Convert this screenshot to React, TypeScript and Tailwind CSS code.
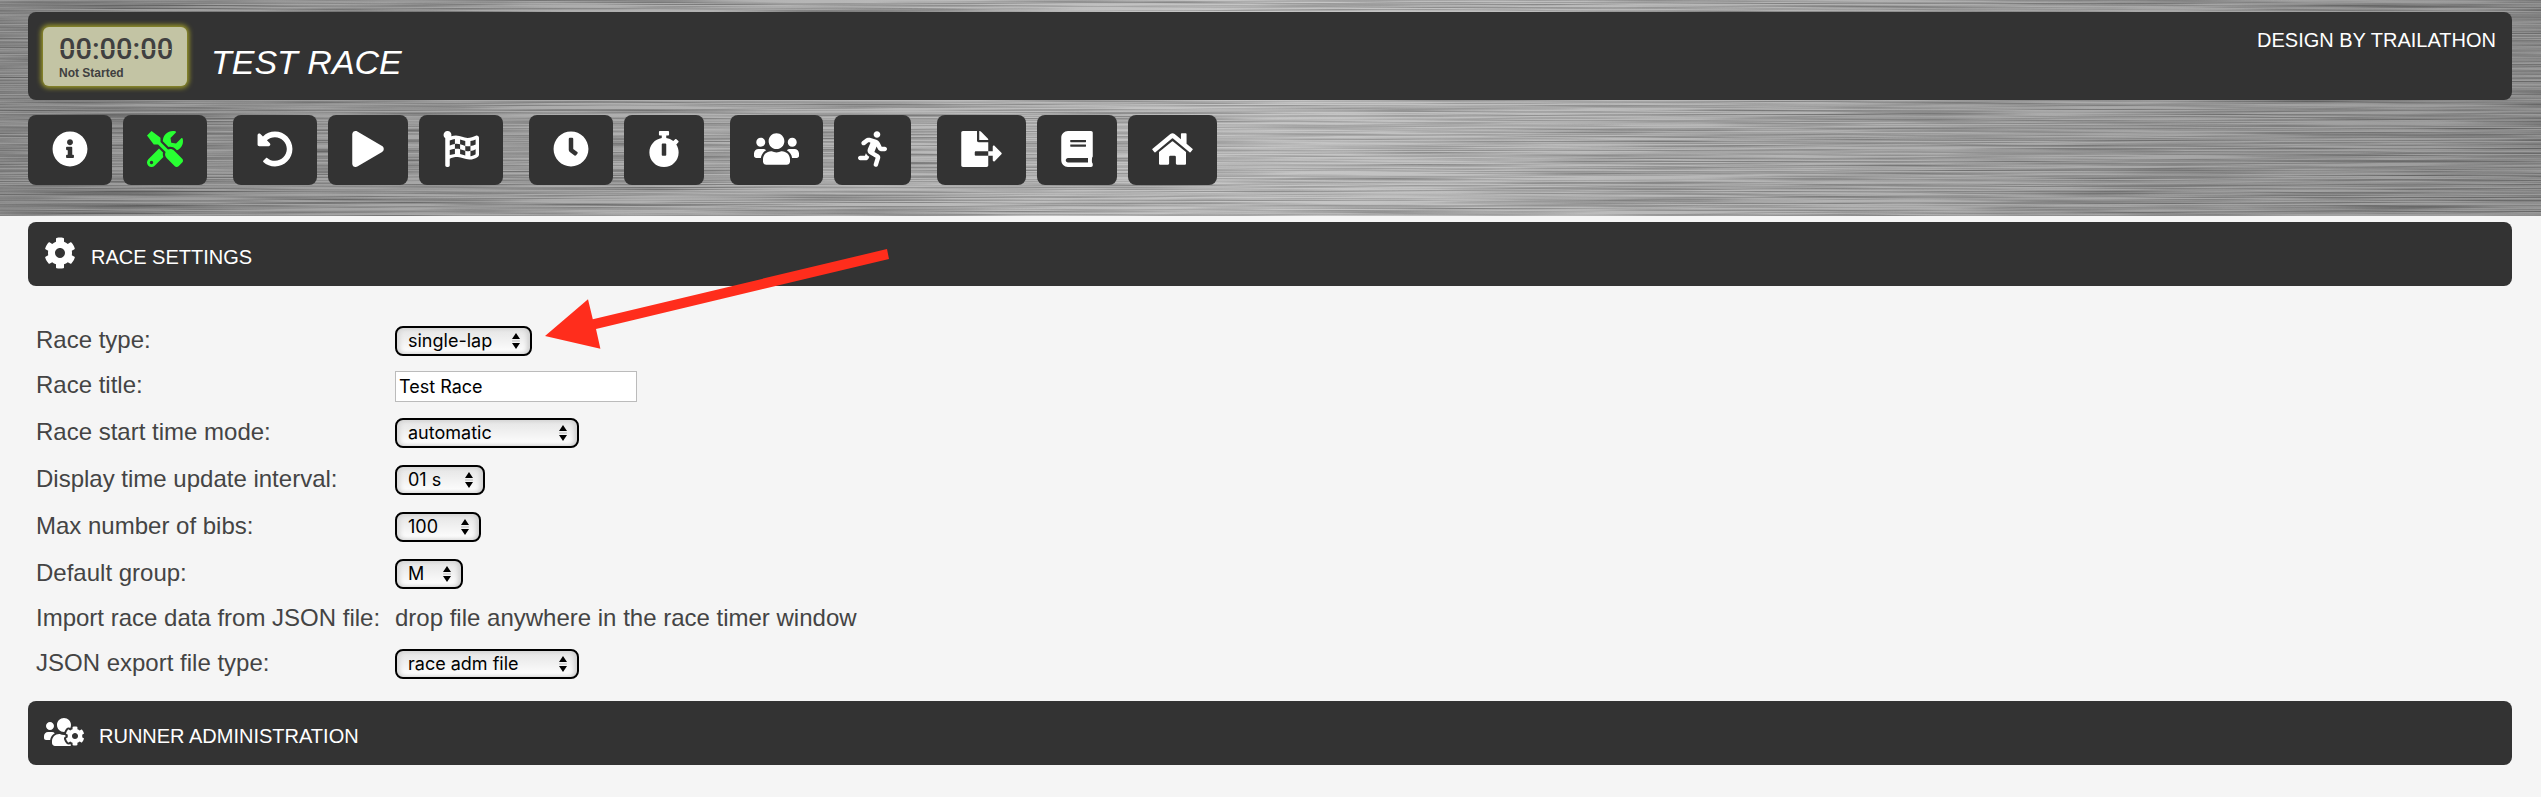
import { useState } from "react";
import type { ReactNode } from "react";
import type { IconType } from "react-icons";
import {
  FaBook,
  FaClock,
  FaCog,
  FaFileExport,
  FaFlagCheckered,
  FaHome,
  FaInfoCircle,
  FaPlay,
  FaRunning,
  FaStopwatch,
  FaTools,
  FaUndoAlt,
  FaUsers,
  FaUsersCog,
} from "react-icons/fa";

type Tool = { label: string; icon: IconType; width: string; active?: boolean };

const toolGroups: Tool[][] = [
  [
    { label: "Info", icon: FaInfoCircle, width: "w-9" },
    { label: "Settings", icon: FaTools, width: "w-9", active: true },
  ],
  [
    { label: "Reset", icon: FaUndoAlt, width: "w-9" },
    { label: "Start", icon: FaPlay, width: "w-8" },
    { label: "Finish", icon: FaFlagCheckered, width: "w-9" },
  ],
  [
    { label: "Clock", icon: FaClock, width: "w-9" },
    { label: "Stopwatch", icon: FaStopwatch, width: "w-8" },
  ],
  [
    { label: "Runners", icon: FaUsers, width: "w-[45px]" },
    { label: "Runner", icon: FaRunning, width: "w-[29px]" },
  ],
  [
    { label: "Export", icon: FaFileExport, width: "w-[41px]" },
    { label: "Manual", icon: FaBook, width: "w-8" },
    { label: "Home", icon: FaHome, width: "w-[41px]" },
  ],
];

// Brushed steel behind the header and the toolbar
function BrushedMetal() {
  return (
    <div className="absolute inset-0 -z-10 overflow-hidden bg-linear-to-r from-[#767676] via-[#b4b4b4] to-[#787878]">
      <svg className="h-full w-full" aria-hidden="true">
        <filter id="brushed" x="0" y="0" width="100%" height="100%" colorInterpolationFilters="sRGB">
          <feTurbulence type="fractalNoise" baseFrequency="0.004 0.7" numOctaves="3" seed="4" />
          <feColorMatrix values="2 0 0 0 -0.3  2 0 0 0 -0.3  2 0 0 0 -0.3  0 0 0 0 0.25" />
        </filter>
        <rect width="100%" height="100%" filter="url(#brushed)" />
      </svg>
    </div>
  );
}

function ToolButton({ label, icon: Icon, width, active }: Tool) {
  return (
    <button
      type="button"
      aria-label={label}
      className={`rounded-lg bg-[#333333] px-6 pt-4 pb-[18px] ${active ? "text-[#28ff32]" : "text-white"}`}
    >
      <Icon className={`h-9 ${width}`} />
    </button>
  );
}

function SectionBar({ title, icon: Icon, iconWidth }: { title: string; icon: IconType; iconWidth: string }) {
  return (
    <h2 className="flex h-16 items-start gap-[15px] rounded-lg bg-[#333333] px-4 pt-[15px] text-white">
      <Icon className={`h-8 ${iconWidth}`} />
      <span className="pt-2 text-[20px] leading-6">{title}</span>
    </h2>
  );
}

function Select({ id, options, width }: { id: string; options: string[]; width: string }) {
  return (
    <div className={`relative ${width}`}>
      <select
        id={id}
        className="block h-[30px] w-full appearance-none rounded-lg border-2 border-black bg-linear-to-b from-[#e4e4e4] to-white pl-[11px] font-[Inter,sans-serif] text-[18px] leading-6 text-black shadow-[inset_-3px_0_4px_#d0d0d0,inset_3px_0_4px_#d8d8d8]"
      >
        {options.map((o) => (
          <option key={o}>{o}</option>
        ))}
      </select>
      <svg viewBox="0 0 8 16" className="pointer-events-none absolute top-[7px] right-3 h-4 w-2" aria-hidden="true">
        <path d="M4 0L8 6H0zM4 16L0 10H8z" fill="#000" />
        <path d="M0 8H8" stroke="#bbb" />
      </svg>
    </div>
  );
}

function SettingRow({ id, label, height, children }: { id?: string; label: string; height: string; children: ReactNode }) {
  return (
    <div className={`flex ${height}`}>
      <label htmlFor={id} className="w-[359px] shrink-0">
        {label}
      </label>
      {children}
    </div>
  );
}

export default function App() {
  const [title, setTitle] = useState("Test Race");

  return (
    <div className="min-h-screen bg-[#f5f5f5] font-['Liberation_Sans',Arial,sans-serif]">
      <header className="relative isolate pt-3 pr-[29px] pb-[31px] pl-7">
        <BrushedMetal />
        <div className="flex h-[88px] items-start rounded-lg bg-[#333333] pr-4 pl-[15px] text-white">
          <div className="mt-[15px] h-[59px] w-36 rounded-md bg-[#c3c4a4] pt-1.5 pl-4 text-[#404040] shadow-[0_0_5px_2px_#a09e28]">
            <div className="relative w-28">
              <time className="block font-[Roboto,sans-serif] text-[29px] leading-8 font-medium">00:00:00</time>
              {/* gap between the upper and lower LCD segments */}
              <span className="absolute top-4 left-0 h-px w-full bg-[#c3c4a4]" />
            </div>
            <p className="text-[12px] leading-4 font-bold">Not Started</p>
          </div>
          <h1 className="pt-[30px] pl-6 text-[34px] leading-10 italic">TEST RACE</h1>
          <p className="ml-auto pt-4 text-[20px] leading-6">DESIGN BY TRAILATHON</p>
        </div>
        <nav className="flex flex-wrap gap-[26px] pt-[15px]">
          {toolGroups.map((group, i) => (
            <div key={i} className="flex gap-[11px]">
              {group.map((tool) => (
                <ToolButton key={tool.label} {...tool} />
              ))}
            </div>
          ))}
        </nav>
      </header>

      <main className="relative pt-1.5 pr-[29px] pl-7">
        <SectionBar title="RACE SETTINGS" icon={FaCog} iconWidth="w-8" />

        <form className="pt-10 pb-2 pl-2 text-[24px] leading-7 text-[#444444]">
          <SettingRow id="type" label="Race type:" height="h-[45px]">
            <Select id="type" width="w-[137px]" options={["single-lap", "multi-lap"]} />
          </SettingRow>
          <SettingRow id="title" label="Race title:" height="h-[47px]">
            <input
              id="title"
              value={title}
              onChange={(e) => setTitle(e.target.value)}
              className="h-[31px] w-[242px] border border-[#bbbbbb] bg-white px-[3px] font-[Inter,sans-serif] text-[18px] text-black"
            />
          </SettingRow>
          <SettingRow id="mode" label="Race start time mode:" height="h-[47px]">
            <Select id="mode" width="w-[184px]" options={["automatic", "manual"]} />
          </SettingRow>
          <SettingRow id="interval" label="Display time update interval:" height="h-[47px]">
            <Select id="interval" width="w-[90px]" options={["01 s", "05 s", "10 s"]} />
          </SettingRow>
          <SettingRow id="bibs" label="Max number of bibs:" height="h-[47px]">
            <Select id="bibs" width="w-[86px]" options={["100", "200", "500"]} />
          </SettingRow>
          <SettingRow id="group" label="Default group:" height="h-[45px]">
            <Select id="group" width="w-[68px]" options={["M", "F"]} />
          </SettingRow>
          <SettingRow label="Import race data from JSON file:" height="h-[45px]">
            <span>drop file anywhere in the race timer window</span>
          </SettingRow>
          <SettingRow id="export" label="JSON export file type:" height="h-[44px]">
            <Select id="export" width="w-[184px]" options={["race adm file", "result file"]} />
          </SettingRow>
        </form>

        <SectionBar title="RUNNER ADMINISTRATION" icon={FaUsersCog} iconWidth="w-10" />

        {/* pointer to the race type drop-down */}
        <svg viewBox="0 0 344 100" className="pointer-events-none absolute top-[33px] left-[545px] h-[100px] w-[344px]" aria-hidden="true">
          <path d="M0 87L43 50.300L47.800 70.300L342 0L344 10L51 80L55.400 99.700Z" fill="#ff2d1c" />
        </svg>
      </main>
    </div>
  );
}
